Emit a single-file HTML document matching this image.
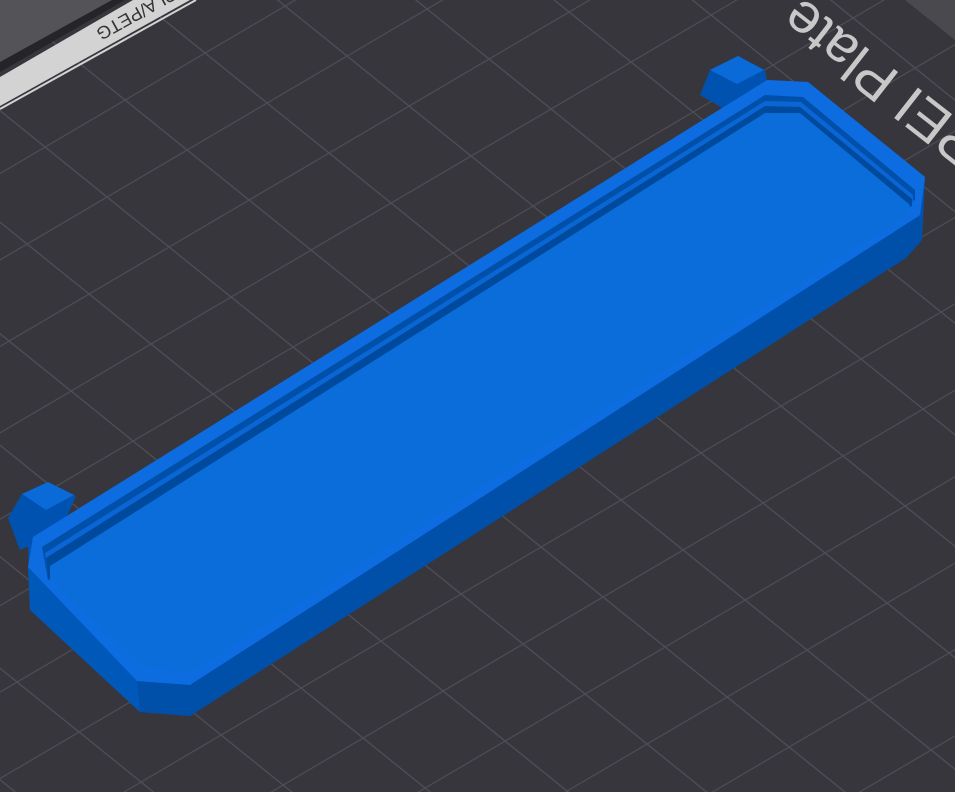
<!DOCTYPE html>
<html><head><meta charset="utf-8"><style>
html,body{margin:0;padding:0;background:#38363d;width:955px;height:792px;overflow:hidden}
svg{display:block}
</style></head><body>
<svg width="955" height="792" viewBox="0 0 955 792" xmlns="http://www.w3.org/2000/svg">
<defs>
<pattern id="g" width="100" height="100" patternUnits="userSpaceOnUse" patternTransform="matrix(0.8,-0.47,0.62,0.5,0,0)">
<rect width="100" height="100" fill="#38363d"/>
<line x1="0" y1="0" x2="100" y2="0" stroke="#4f4d55" stroke-width="3"/>
<line x1="0" y1="0" x2="0" y2="100" stroke="#4f4d55" stroke-width="3"/>
</pattern>
</defs>
<rect width="955" height="792" fill="url(#g)"/>
<!-- plate corner top-left -->
<polygon points="0,0 125,0 0,72" fill="#252429"/>
<polygon points="0,0 112,0 0,62" fill="#545358"/>
<polygon points="133,0 190,0 0,106 0,77" fill="#d3d3d3"/>
<line x1="0" y1="109" x2="196" y2="0" stroke="#d3d3d3" stroke-width="2"/>
<text transform="translate(95,30) rotate(151)" text-anchor="end" font-family="Liberation Sans, sans-serif" font-size="18" fill="#333">PLA/PETG</text>
<!-- big text -->
<text transform="translate(985,140) rotate(-142)" font-family="Liberation Sans, sans-serif" font-size="56" fill="#c8c8c8">PEI Plate</text>
<polygon points="905,0 955,0 955,40" fill="#4a494e"/>
<!-- pegs -->
<polygon points="700,95 710,70 738,56 765,70 770,95 735,115" fill="#0052b0"/>
<polygon points="710,70 738,56 764,70 737,84" fill="#0a6ad8"/>
<polygon points="8,518 22,494 48,482 76,496 60,532 20,550" fill="#0052b0"/>
<polygon points="22,494 48,482 74,495 46,510" fill="#0a6ad8"/>
<!-- silhouette (walls) -->
<polygon points="28,545 33,537 767,80 808,82 925,177 922,240 906,258 190,716 140,712 30,610" fill="#0053b2"/>
<polygon points="137,681 190,685 922,215 922,240 906,258 190,716 140,712" fill="#004fa8"/>
<polygon points="28,567 137,681 140,712 30,610" fill="#0058b8"/>
<!-- rim top -->
<polygon points="33,537 767,80 808,82 925,177 920,215 190,685 137,681 28,567" fill="#0d6de0"/>
<!-- grooves -->
<polygon points="42,547 765,95 803,97 915,190 915,200 48,580" fill="#0050aa"/>
<polygon points="45,553 765,101 801,102 913,195 913,203 48,580" fill="#0a66d4"/>
<polygon points="46,558 765,106 800,107 912,199 912,206 48,580" fill="#004a9e"/>
<!-- floor -->
<polygon points="50,566 765,113 800,113 910,205 908,214 193,671 143,668 50,580" fill="#0a6dd9"/>
</svg>
</body></html>
